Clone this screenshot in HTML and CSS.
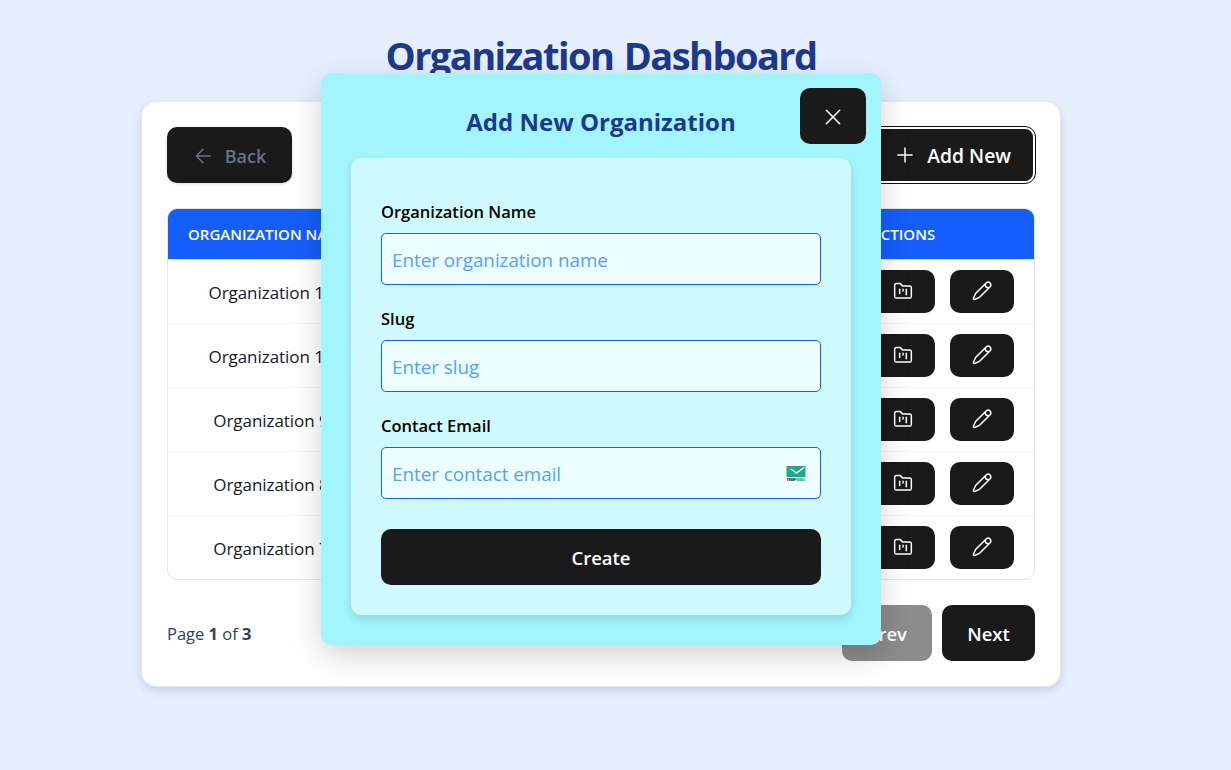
FILE: index.html
```html
<!DOCTYPE html>
<html lang="en">
<head>
<meta charset="utf-8">
<title>Organization Dashboard</title>
<link rel="stylesheet" href="styles.css">
</head>
<body>
<svg class="defs" width="0" height="0">
  <symbol id="folder" viewBox="0 0 24 24"><path d="M4 20.500h16a2 2 0 0 0 2-2V8a2 2 0 0 0-2-2h-7.900a2 2 0 0 1-1.700-.9L9.600 3.900A2 2 0 0 0 7.930 3H4a2 2 0 0 0-2 2v13.500c0 1.100.900 2 2 2ZM8 10v5M12 10v2M16 10v6.500"/></symbol>
  <symbol id="pencil" viewBox="0 0 24 24"><path d="M21.700 2.300a3.300 3.300 0 0 0-4.700 0L4.800 14.500c-.5.5-.8 1-1 1.700L1.700 20.900c-.2.800.5 1.500 1.300 1.300l4.700-1.900c.7-.2 1.200-.5 1.700-1L21.700 7a3.300 3.300 0 0 0 0-4.700ZM16.200 3.500c-1 2.800 1.500 5.300 4.300 4.300"/></symbol>
</svg>
<main class="page">
  <h1 class="title">Organization Dashboard</h1>
  <section class="card">
    <div class="toolbar">
      <button class="btn back"><svg class="icon" viewBox="0 0 24 24"><path d="m12 20-8-8 8-8M20.500 12H4"/></svg><span>Back</span></button>
      <button class="btn add"><svg class="icon" viewBox="0 0 24 24"><path d="M3.500 12h17M12 3.500v17"/></svg><span>Add New</span></button>
    </div>
    <div class="table">
      <div class="row head"><span class="name">ORGANIZATION NAME</span><span></span><span>ACTIONS</span></div>
      <div class="row"><span>Organization 11</span><span></span><div class="actions"><button class="act"><svg class="icon"><use href="#folder"/></svg></button><button class="act"><svg class="icon"><use href="#pencil"/></svg></button></div></div>
      <div class="row"><span>Organization 10</span><span></span><div class="actions"><button class="act"><svg class="icon"><use href="#folder"/></svg></button><button class="act"><svg class="icon"><use href="#pencil"/></svg></button></div></div>
      <div class="row"><span>Organization 9</span><span></span><div class="actions"><button class="act"><svg class="icon"><use href="#folder"/></svg></button><button class="act"><svg class="icon"><use href="#pencil"/></svg></button></div></div>
      <div class="row"><span>Organization 8</span><span></span><div class="actions"><button class="act"><svg class="icon"><use href="#folder"/></svg></button><button class="act"><svg class="icon"><use href="#pencil"/></svg></button></div></div>
      <div class="row"><span>Organization 7</span><span></span><div class="actions"><button class="act"><svg class="icon"><use href="#folder"/></svg></button><button class="act"><svg class="icon"><use href="#pencil"/></svg></button></div></div>
    </div>
    <div class="footer">
      <p class="count">Page <b>1</b> of <b>3</b></p>
      <div class="pager"><button class="btn prev">Prev</button><button class="btn next">Next</button></div>
    </div>
  </section>
  <div class="modal">
    <h2 class="modal-title">Add New Organization</h2>
    <button class="close"><svg class="icon" viewBox="0 0 24 24"><path d="M4 4l16 16M20 4L4 20"/></svg></button>
    <form class="form">
      <label class="label">Organization Name</label>
      <input class="input" placeholder="Enter organization name">
      <label class="label">Slug</label>
      <input class="input" placeholder="Enter slug">
      <label class="label">Contact Email</label>
      <div class="field">
        <input class="input" placeholder="Enter contact email">
        <svg class="mail" viewBox="0 0 24 24"><rect width="24" height="24" fill="#f5fdff"/><rect x="2.500" y="5" width="19" height="11" fill="#20a88e"/><path d="M7 8l5.500 4L20 6.500" fill="none" stroke="#fff" stroke-width="1.500"/><text x="2.500" y="20" font-size="3.800" textLength="9.500" fill="#16324a">TEMP</text><text x="12" y="20" font-size="3.800" textLength="9.500" fill="#20a88e">MAIL</text></svg>
      </div>
      <button class="btn create" type="button">Create</button>
    </form>
  </div>
</main>
</body>
</html>
```
FILE: styles.css
```css
* { box-sizing: border-box; margin: 0; }
body { background: #e6efff; font-family: "Open Sans", "Noto Sans", sans-serif; color: #101828; overflow: hidden; }
button, input { font: inherit; border: 0; }
.defs { position: absolute; }
.page { position: relative; width: 1202px; height: 770px; padding: 30px 141px 0; }
.title { height: 71px; line-height: 51px; text-align: center; font-size: 38px; font-weight: 700; color: #1c398e; letter-spacing: -1.55px; word-spacing: 2px; white-space: nowrap; }
.card { height: 586px; padding: 25px; background: #fff; border: 1px solid #e5e7eb; border-radius: 15px; box-shadow: 0 4px 8px rgba(0,0,0,.12); }
.toolbar { display: flex; justify-content: space-between; height: 56px; margin-bottom: 25px; }
.btn { display: flex; align-items: center; justify-content: center; height: 56px; border-radius: 10px; background: #1a1a1a; color: #fff; font-size: 18.500px; font-weight: 600; }
.icon { width: 20px; height: 20px; fill: none; stroke: currentColor; stroke-width: 1.800; stroke-linecap: round; stroke-linejoin: round; }
.back { width: 125px; gap: 12px; padding-top: 2px; color: #6a7282; font-size: 18px; box-shadow: 0 1px 3px rgba(0,0,0,.15); }
.add { width: 167px; gap: 12px; border: 2px solid #fff; outline: 1px solid #101010; outline-offset: 0; justify-content: flex-end; padding-right: 22px; font-size: 19.300px; }
.table { height: 372px; border: 1px solid #e5e7eb; border-radius: 10px; overflow: hidden; }
.row { display: grid; grid-template-columns: 206px 1fr 262px; align-items: center; justify-items: center; height: 64px; border-bottom: 1px solid #f3f4f6; font-size: 17px; letter-spacing: -.05px; }
.row > span { padding-top: 2px; }
.row:last-child { height: 63px; border-bottom: 0; }
.row.head { height: 51px; background: #155dfc; color: #fff; font-size: 15px; letter-spacing: 0; font-weight: 600; border-color: #e5e7eb; }
.head > span { padding-top: 0; }
.head .name { justify-self: start; padding-left: 20px; }
.actions { display: flex; gap: 15px; width: 222px; justify-content: flex-end; }
.act { display: flex; align-items: center; justify-content: center; width: 64px; height: 43px; padding-bottom: 3px; border-radius: 10px; background: #1a1a1a; color: #fff; }
.footer { display: flex; justify-content: space-between; align-items: center; margin-top: 25px; }
.count { font-size: 16.500px; color: #364153; }
.pager { display: flex; gap: 10px; }
.prev { width: 90px; background: #8c8c8c; }
.next { width: 93px; }
.modal { position: absolute; left: 321px; top: 73px; width: 560px; height: 572px; padding: 30px; border-radius: 10px; background: #a2f4fd; box-shadow: 0 10px 30px rgba(0,0,0,.18); }
.modal-title { height: 55px; line-height: 38px; text-align: center; color: #1c398e; font-size: 24px; font-weight: 700; }
.close { position: absolute; right: 15px; top: 15px; width: 66px; height: 56px; padding-top: 3px; display: flex; align-items: center; justify-content: center; border-radius: 10px; background: #1a1a1a; color: #fff; }
.form { height: 457px; padding: 40px 30px 30px; border-radius: 10px; background: #cefafe; box-shadow: 0 4px 8px rgba(0,0,0,.13); }
.label { display: block; height: 27px; line-height: 27px; margin-bottom: 8px; font-size: 16.500px; font-weight: 600; color: #000; }
.input { display: block; width: 100%; height: 52px; margin-bottom: 20px; padding: 2px 10px 0; border: 1px solid #155dfc; border-radius: 5px; background: #ecfeff; font-size: 18.800px; }
.input::placeholder { color: #51a2ff; opacity: 1; }
.field { position: relative; }
.mail { position: absolute; right: 13px; top: 14px; width: 24px; height: 24px; font-weight: 800; }
.create { width: 100%; margin-top: 30px; }
```
